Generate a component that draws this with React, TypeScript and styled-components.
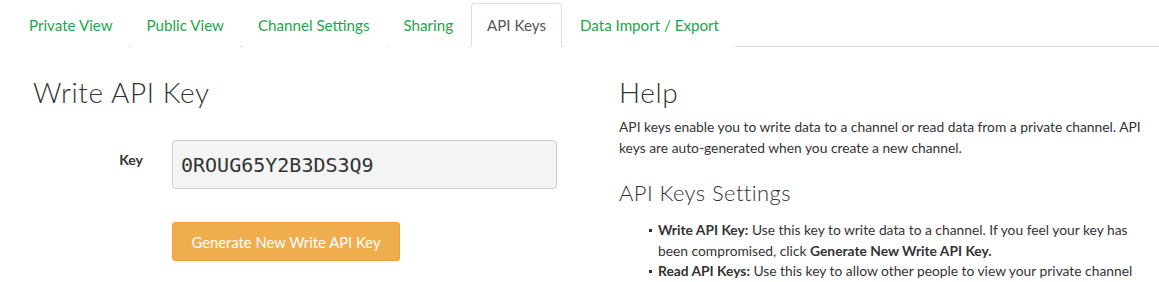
import styled, { createGlobalStyle } from 'styled-components';

const linkGreen = '#22a54a';
const textColor = '#333';
const headingFont = "Lato, 'Open Sans', sans-serif";
const bodyFont = "Lato, 'Noto Sans', sans-serif";

const GlobalStyle = createGlobalStyle`
  html, body {
    margin: 0;
    padding: 0;
    background: #fff;
    color: ${textColor};
    font-family: ${bodyFont};
    font-size: 14px;
    overflow: hidden;
  }
`;

const Page = styled.div`
  padding: 3px 0 0 13px;
`;

const Tabs = styled.ul`
  display: flex;
  list-style: none;
  margin: 0;
  padding: 0;
  border-bottom: 1px solid #ddd;
`;

const Tab = styled.li<{ active?: boolean }>`
  margin-right: 2px;
  margin-bottom: -1px;
  padding: 10px 15px;
  line-height: 22px;
  font-size: 15.15px;
  border: 1px solid ${(p) => (p.active ? '#ddd' : 'transparent')};
  border-bottom-color: ${(p) => (p.active ? '#fff' : 'transparent')};
  border-radius: 4px 4px 0 0;
  background: #fff;
  color: ${(p) => (p.active ? '#555' : linkGreen)};
  cursor: pointer;
`;

const Content = styled.div`
  display: grid;
  grid-template-columns: 586px 586px;
  margin-left: 5px;
`;

const Column = styled.section`
  padding: 0 15px;
`;

const Heading = styled.h3`
  margin: 29px 0 0;
  font-family: ${headingFont};
  font-weight: 300;
  font-size: 28px;
  line-height: 32px;
  letter-spacing: 0.6px;
  color: ${textColor};
`;

const SubHeading = styled.h4`
  margin: 22px 0 0;
  font-family: ${headingFont};
  font-weight: 300;
  font-size: 22px;
  line-height: 26px;
  letter-spacing: 0.4px;
  color: ${textColor};
`;

const FormRow = styled.div`
  display: grid;
  grid-template-columns: 110px 385px;
  column-gap: 29px;
  align-items: start;
  margin-top: 32px;
`;

const Label = styled.label`
  text-align: right;
  font-weight: 700;
  font-size: 14px;
  padding-top: 11px;
`;

const KeyInput = styled.div`
  box-sizing: border-box;
  height: 49px;
  padding: 0 8px;
  display: flex;
  align-items: center;
  background: #f4f4f4;
  border: 1px solid #ccc;
  border-radius: 4px;
  font-family: 'DejaVu Sans Mono', monospace;
  font-size: 20px;
  color: #333;
`;

const ButtonRow = styled.div`
  margin: 33px 0 0 139px;
`;

const WarningButton = styled.button`
  height: 39px;
  width: 228px;
  padding: 0;
  white-space: nowrap;
  background: #f0ad4e;
  border: 1px solid #eea236;
  border-radius: 3px;
  color: #fff;
  font-family: ${headingFont};
  font-weight: 400;
  font-size: 14.8px;
  cursor: pointer;
`;

const Paragraph = styled.p`
  margin: 8px 0 0;
  font-size: 13.8px;
  line-height: 21px;
  max-width: 530px;
`;

const BulletList = styled.ul`
  margin: 14px 0 0;
  padding-left: 39px;
  font-size: 13.8px;
  line-height: 20.5px;
  max-width: 490px;
  list-style: none;

  li {
    position: relative;
  }

  li::before {
    content: '';
    position: absolute;
    left: -9px;
    top: 9px;
    width: 3px;
    height: 3px;
    background: ${textColor};
  }
`;

const tabs = ['Private View', 'Public View', 'Channel Settings', 'Sharing', 'API Keys', 'Data Import / Export'];

export default function App() {
  return (
    <Page>
      <GlobalStyle />
      <Tabs>
        {tabs.map((t) => (
          <Tab key={t} active={t === 'API Keys'}>
            {t}
          </Tab>
        ))}
      </Tabs>
      <Content>
        <Column>
          <Heading>Write API Key</Heading>
          <FormRow>
            <Label>Key</Label>
            <KeyInput>0ROUG65Y2B3DS3Q9</KeyInput>
          </FormRow>
          <ButtonRow>
            <WarningButton>Generate New Write API Key</WarningButton>
          </ButtonRow>
        </Column>
        <Column>
          <Heading>Help</Heading>
          <Paragraph>
            API keys enable you to write data to a channel or read data from a private channel. API keys are
            auto-generated when you create a new channel.
          </Paragraph>
          <SubHeading>API Keys Settings</SubHeading>
          <BulletList>
            <li>
              <b>Write API Key:</b> Use this key to write data to a channel. If you feel your key has been
              compromised, click <b>Generate New Write API Key.</b>
            </li>
            <li>
              <b>Read API Keys:</b> Use this key to allow other people to view your private channel
            </li>
          </BulletList>
        </Column>
      </Content>
    </Page>
  );
}
